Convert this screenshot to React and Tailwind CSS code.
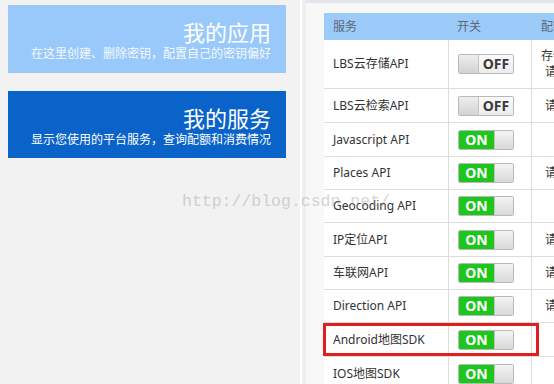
import React from "react";

const font = { fontFamily: '"Noto Sans", "Noto Sans CJK SC", sans-serif' };

function Switch({ on }) {
  if (on) {
    return (
      <div className="w-[56px] h-[20px] shrink-0 border border-[#b9b9b9] rounded-[2px] flex overflow-hidden">
        <div className="w-[35px] shrink-0 bg-[#1cc61c] text-white text-[14px] font-bold flex items-center justify-center leading-none">ON</div>
        <div className="flex-1 bg-gradient-to-b from-[#f4f4f4] to-[#d9d9d9] border-l border-[#c4c4c4]" />
      </div>
    );
  }
  return (
    <div className="w-[56px] h-[20px] shrink-0 border border-[#b9b9b9] rounded-[2px] flex overflow-hidden">
      <div className="w-[20px] shrink-0 bg-gradient-to-b from-[#eeeeee] to-[#d3d3d3] border-r border-[#c4c4c4]" />
      <div className="flex-1 bg-gradient-to-b from-[#fafafa] to-[#ececec] text-[#3a3a3a] text-[14px] font-bold flex items-center justify-center leading-none">OFF</div>
    </div>
  );
}

const rows = [
  { name: "LBS云存储API", on: false, h: "h-[49px]", c1: "存储空间：10G", c2: "请求数：10万次/天" },
  { name: "LBS云检索API", on: false, h: "h-[34px]", c1: "请求数：10万次/天" },
  { name: "Javascript API", on: true, h: "h-[34px]", c1: "" },
  { name: "Places API", on: true, h: "h-[33px]", c1: "请求数：10万次/天" },
  { name: "Geocoding API", on: true, h: "h-[33px]", c1: "" },
  { name: "IP定位API", on: true, h: "h-[34px]", c1: "请求数：10万次/天" },
  { name: "车联网API", on: true, h: "h-[33px]", c1: "请求数：10万次/天" },
  { name: "Direction API", on: true, h: "h-[33px]", c1: "请求数：10万次/天" },
  { name: "Android地图SDK", on: true, h: "h-[34px]", c1: "", mark: true },
  { name: "IOS地图SDK", on: true, h: "h-[34px]", c1: "" },
];

export default function App() {
  return (
    <div className="relative w-[554px] h-[384px] overflow-hidden flex bg-[#f2f2f2]" style={font}>
      <div className="w-[300px] shrink-0 bg-[#f2f2f2] pl-[8px] pt-[5px]">
        <div className="w-[278px] h-[68px] bg-[#99c9fa] text-white text-right pr-[15px] pt-[14px]">
          <div className="text-[22px] leading-[26px]">我的应用</div>
          <div className="text-[12px] leading-[16px] mt-[1px] text-[#f4f9ff]">在这里创建、删除密钥，配置自己的密钥偏好</div>
        </div>
        <div className="w-[278px] h-[67px] mt-[18px] bg-[#0a63c8] text-white text-right pr-[15px] pt-[14px]">
          <div className="text-[22px] leading-[26px]">我的服务</div>
          <div className="text-[12px] leading-[16px] mt-[1px]">显示您使用的平台服务，查询配额和消费情况</div>
        </div>
      </div>
      <div className="w-[2px] shrink-0 bg-white" />
      <div className="w-[4px] shrink-0 bg-[#efefef]" />
      <div className="flex-1 min-w-0 bg-[#f8f8f8] pl-[18px] pt-[13px] relative overflow-hidden">
        <div className="absolute left-0 top-0 right-0 h-[3px] bg-[#e4e4ec]" />
        <div className="w-[300px]">
          <div className="flex h-[27px] bg-[#9dcbf9] text-[12px] text-[#5a6878] items-center">
            <div className="w-[125px] shrink-0 pl-[9px]">服务</div>
            <div className="w-[83px] shrink-0 pl-[8px]">开关</div>
            <div className="flex-1 pl-[9px] whitespace-nowrap">配额</div>
          </div>
          {rows.map((r) => (
            <div key={r.name} className={`relative flex ${r.h} bg-white border-b border-[#dddddd] text-[12px] text-[#333]`}>
              <div className="w-[125px] shrink-0 pl-[9px] flex items-center border-r border-[#dddddd] whitespace-nowrap">{r.name}</div>
              <div className="w-[83px] shrink-0 pl-[9px] flex items-center border-r border-[#dddddd]">
                <Switch on={r.on} />
              </div>
              <div className="flex-1 flex flex-col justify-center whitespace-nowrap leading-[16px]">
                {r.c2 ? (
                  <>
                    <div className="pl-[9px]">{r.c1}</div>
                    <div className="pl-[13px]">{r.c2}</div>
                  </>
                ) : (
                  <div className="pl-[13px]">{r.c1}</div>
                )}
              </div>
              {r.mark && (
                <div className="absolute left-[-1px] top-0 w-[216px] h-[33px] border-[3px] border-[#e21d1d]" />
              )}
            </div>
          ))}
        </div>
      </div>
      <div
        className="absolute left-[182px] top-[192px] text-[16.5px] leading-[20px] text-[#9a9a9a] opacity-40 whitespace-nowrap pointer-events-none"
        style={{ fontFamily: '"Liberation Mono", monospace' }}
      >
        http://blog.csdn.net/
      </div>
    </div>
  );
}
